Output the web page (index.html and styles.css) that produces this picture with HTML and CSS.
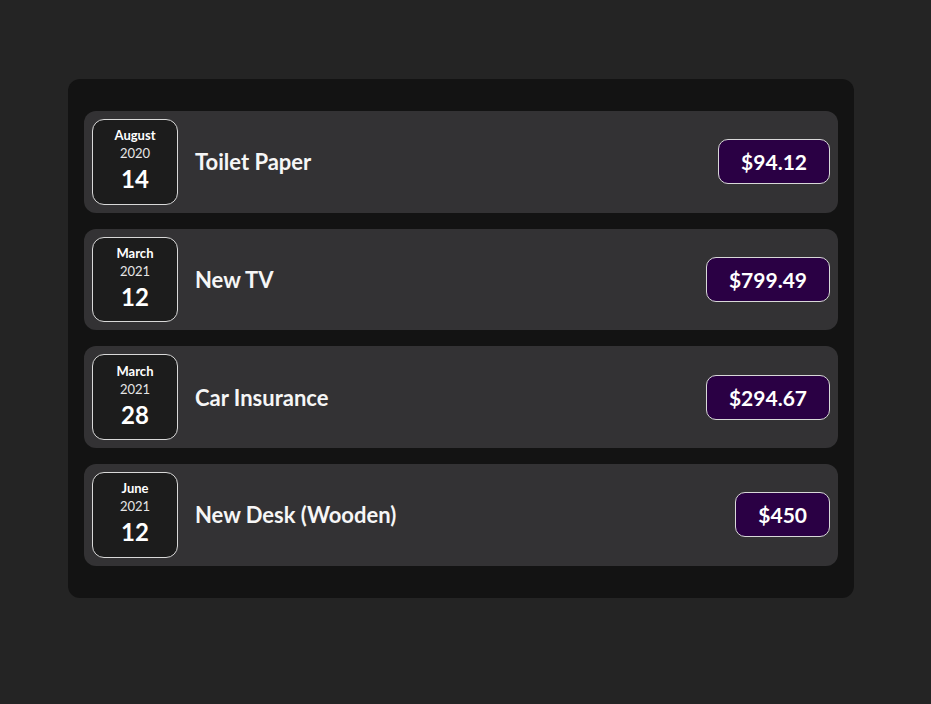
FILE: index.html
```html
<!DOCTYPE html>
<html>
<head>
<meta charset="utf-8">
<link rel="stylesheet" href="styles.css">
</head>
<body>
<div class="expenses">
  <div class="item">
    <div class="date"><div class="month">August</div><div class="year">2020</div><div class="day">14</div></div>
    <div class="desc"><h2>Toilet Paper</h2><div class="price">$94.12</div></div>
  </div>
  <div class="item">
    <div class="date"><div class="month">March</div><div class="year">2021</div><div class="day">12</div></div>
    <div class="desc"><h2>New TV</h2><div class="price">$799.49</div></div>
  </div>
  <div class="item">
    <div class="date"><div class="month">March</div><div class="year">2021</div><div class="day">28</div></div>
    <div class="desc"><h2>Car Insurance</h2><div class="price">$294.67</div></div>
  </div>
  <div class="item">
    <div class="date"><div class="month">June</div><div class="year">2021</div><div class="day">12</div></div>
    <div class="desc"><h2>New Desk (Wooden)</h2><div class="price">$450</div></div>
  </div>
</div>
</body>
</html>
```
FILE: styles.css
```css
html, body {
  margin: 0;
  padding: 0;
  background: #242424;
  font-family: Lato, "Open Sans", sans-serif;
  color: #fff;
}
body {
  padding-top: 79px;
  min-height: 704px;
  box-sizing: border-box;
}
.expenses {
  margin-left: 68px;
  width: 786px;
  box-sizing: border-box;
  padding: 32px 16px;
  background: #131313;
  border-radius: 12px;
  display: flex;
  flex-direction: column;
  gap: 16px;
}
.item {
  display: flex;
  align-items: center;
  gap: 17px;
  padding: 8px;
  background: #333234;
  border-radius: 12px;
}
.date {
  width: 86px;
  height: 85.7px;
  box-sizing: border-box;
  border: 1px solid #d8d8d8;
  border-radius: 12px;
  background: #1c1c1c;
  display: flex;
  flex-direction: column;
  align-items: center;
  justify-content: center;
  flex-shrink: 0;
}
.month {
  font-size: 13px;
  font-weight: 700;
  line-height: 17px;
  margin-top: -1px;
}
.year {
  font-size: 13px;
  line-height: 19px;
  color: #e6e6e6;
}
.day {
  font-size: 24px;
  font-weight: 700;
  line-height: 32px;
}
.desc {
  flex: 1;
  display: flex;
  align-items: center;
  justify-content: space-between;
}
.desc h2 {
  margin: 0;
  font-size: 22px;
  font-weight: 700;
  color: #f6f6f6;
}
.price {
  font-size: 21px;
  font-weight: 700;
  background: #2a0044;
  border: 1px solid #d8d8d8;
  border-radius: 10px;
  padding: 9px 22px;
  line-height: 25px;
}
```
